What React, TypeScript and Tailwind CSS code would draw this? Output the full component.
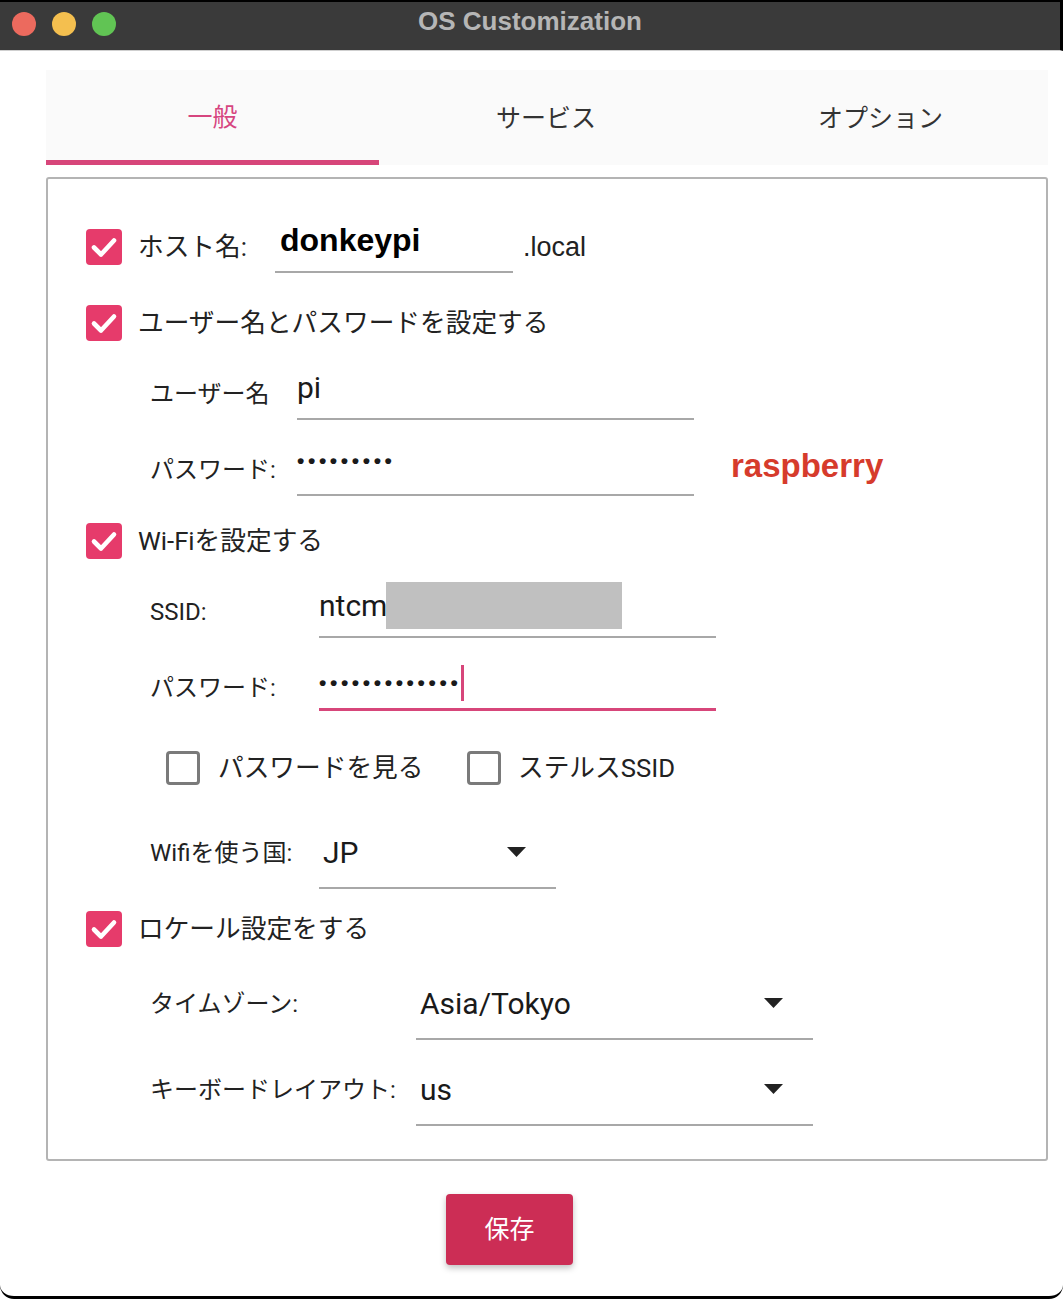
import React from "react";

const jp = { fontFamily: "Roboto, 'Noto Sans CJK JP', sans-serif" };
const arial = { fontFamily: "'Liberation Sans', sans-serif" };

const Checked = () => (
  <div className="flex h-[36px] w-[36px] shrink-0 items-center justify-center rounded-[4px] bg-[#e63b6b]">
    <svg width="30" height="30" viewBox="0 0 30 30" fill="none">
      <path d="M5 15.5 L12 22.5 L25 8.5" stroke="white" strokeWidth="4.6" strokeLinecap="round" strokeLinejoin="round" />
    </svg>
  </div>
);

const Unchecked = () => (
  <div className="h-[34px] w-[34px] shrink-0 rounded-[4px] border-[3px] border-[#7a7a7a]" />
);

const Arrow = () => (
  <svg width="19" height="10" viewBox="0 0 19 10">
    <path d="M0 0 H19 L9.5 10 Z" fill="#222" />
  </svg>
);

const Label = ({ w, children }: { w: string; children: React.ReactNode }) => (
  <div className={`${w} shrink-0 text-[24px] text-[#222]`} style={jp}>
    {children}
  </div>
);

const Select = ({ w, value }: { w: string; value: string }) => (
  <div className={`${w} flex h-[72px] items-center justify-between border-b-2 border-[#a8a8a8] pl-[4px] pr-[30px]`}>
    <span className="text-[30px] text-[#1a1a1a]" style={{ fontFamily: "Roboto, sans-serif" }}>
      {value}
    </span>
    <Arrow />
  </div>
);

const CheckRow = ({ h, children }: { h: string; children: React.ReactNode }) => (
  <div className={`${h} flex items-center gap-[16px]`}>
    <Checked />
    <span className="text-[25.7px] text-[#222]" style={jp}>
      {children}
    </span>
  </div>
);

export default function App() {
  const value = { fontFamily: "Roboto, sans-serif" };
  return (
    <div className="relative h-[1300px] w-[1064px] bg-white">
      <div className="flex h-[1299px] w-[1063px] flex-col rounded-b-[14px] border-b-[3px] border-black">
        {/* title bar */}
        <div className="relative flex h-[51px] items-center border-t-2 border-r-[3px] border-b border-black border-b-[#cfcfcf] bg-[#3a3a3a]">
          <div className="flex items-center gap-[16px] pl-[12px] pb-[4px]">
            <div className="h-[24px] w-[24px] rounded-full bg-[#ec6a5e]" />
            <div className="h-[24px] w-[24px] rounded-full bg-[#f4bf4f]" />
            <div className="h-[24px] w-[24px] rounded-full bg-[#61c454]" />
          </div>
          <div className="absolute left-0 right-0 top-[0px] text-center text-[26px] font-bold text-[#b6b6b6]" style={arial}>
            OS Customization
          </div>
        </div>

        {/* tabs */}
        <div className="ml-[46px] mt-[19px] flex h-[95px] w-[1002px] bg-[#fafafa]" style={jp}>
          <div className="flex w-[333px] flex-col">
            <div className="flex flex-1 items-center justify-center pt-[6px] text-[25px] text-[#d6457f]">一般</div>
            <div className="h-[5px] bg-[#d7467a]" />
          </div>
          <div className="flex w-[334px] items-center justify-center pt-[2px] text-[25px] text-[#333]">サービス</div>
          <div className="flex w-[335px] items-center justify-center pt-[2px] text-[25px] text-[#333]">オプション</div>
        </div>

        {/* form box */}
        <div className="ml-[46px] mt-[12px] flex h-[984px] w-[1002px] flex-col rounded-[3px] border-2 border-[#b4b4b4] pb-[20px] pl-[38px] pt-[30px]">
          {/* hostname */}
          <div className="flex h-[76px] items-center">
            <Checked />
            <span className="ml-[16px] w-[137px] text-[25.7px] text-[#222]" style={jp}>
              ホスト名:
            </span>
            <div className="flex h-[52px] w-[238px] items-center border-b-2 border-[#a8a8a8] pb-[12px] pl-[5px]">
              <span className="text-[32px] font-bold text-black" style={arial}>
                donkeypi
              </span>
            </div>
            <span className="ml-[10px] text-[27px] text-[#222]" style={arial}>
              .local
            </span>
          </div>

          <CheckRow h="h-[76px]">ユーザー名とパスワードを設定する</CheckRow>

          {/* username */}
          <div className="flex h-[66px] items-center pl-[64px]">
            <Label w="w-[147px]">ユーザー名</Label>
            <div className="flex h-[52px] w-[397px] items-center border-b-2 border-[#a8a8a8] pb-[12px]">
              <span className="text-[30px] text-[#1a1a1a]" style={value}>
                pi
              </span>
            </div>
          </div>

          {/* password */}
          <div className="flex h-[86px] items-center pl-[64px]">
            <Label w="w-[147px]">パスワード:</Label>
            <div className="flex h-[52px] w-[397px] items-center border-b-2 border-[#a8a8a8] pb-[16px]">
              <span className="text-[21px] font-bold tracking-[3.6px] text-[#1a1a1a]" style={arial}>
                •••••••••
              </span>
            </div>
            <span className="mb-[8px] ml-[37px] text-[33px] font-bold text-[#d63b2c]" style={arial}>
              raspberry
            </span>
          </div>

          <CheckRow h="h-[56px]">Wi-Fiを設定する</CheckRow>

          {/* ssid */}
          <div className="flex h-[86px] items-center pl-[64px]">
            <Label w="w-[169px]">SSID:</Label>
            <div className="relative flex h-[52px] w-[397px] items-center border-b-2 border-[#a8a8a8] pb-[12px]">
              <span className="text-[30px] text-[#1a1a1a]" style={value}>
                ntcm
              </span>
              <div className="absolute left-[67px] top-[-4px] h-[47px] w-[236px] bg-[#c0c0c0]" />
            </div>
          </div>

          {/* wifi password */}
          <div className="flex h-[66px] items-center pl-[64px]">
            <Label w="w-[169px]">パスワード:</Label>
            <div className="flex h-[46px] w-[397px] items-center border-b-[3px] border-[#d7467a] pb-[8px]">
              <span className="text-[21px] font-bold tracking-[3.6px] text-[#1a1a1a]" style={arial}>
                •••••••••••••
              </span>
              <div className="h-[36px] w-[3px] bg-[#d7467a]" />
            </div>
          </div>

          {/* show password / stealth */}
          <div className="flex h-[94px] items-center pl-[80px]" style={jp}>
            <Unchecked />
            <span className="ml-[18px] w-[249px] text-[25.7px] text-[#222]">パスワードを見る</span>
            <Unchecked />
            <span className="ml-[17px] text-[25.7px] text-[#222]">ステルスSSID</span>
          </div>

          {/* country */}
          <div className="flex h-[76px] items-center pl-[64px]">
            <Label w="w-[169px]">Wifiを使う国:</Label>
            <Select w="w-[237px]" value="JP" />
          </div>

          <CheckRow h="h-[76px]">ロケール設定をする</CheckRow>

          {/* timezone */}
          <div className="flex h-[74px] items-center pl-[64px]">
            <Label w="w-[266px]">タイムゾーン:</Label>
            <Select w="w-[397px]" value="Asia/Tokyo" />
          </div>

          {/* keyboard */}
          <div className="flex h-[98px] items-center pl-[64px]">
            <Label w="w-[266px]">キーボードレイアウト:</Label>
            <Select w="w-[397px]" value="us" />
          </div>
        </div>

        {/* save */}
        <div className="ml-[446px] mt-[33px] flex h-[71px] w-[127px] items-center justify-center rounded-[4px] bg-[#cc2d55] shadow-[0_3px_6px_rgba(0,0,0,0.25)]">
          <span className="text-[25px] text-white" style={jp}>
            保存
          </span>
        </div>
      </div>
    </div>
  );
}
